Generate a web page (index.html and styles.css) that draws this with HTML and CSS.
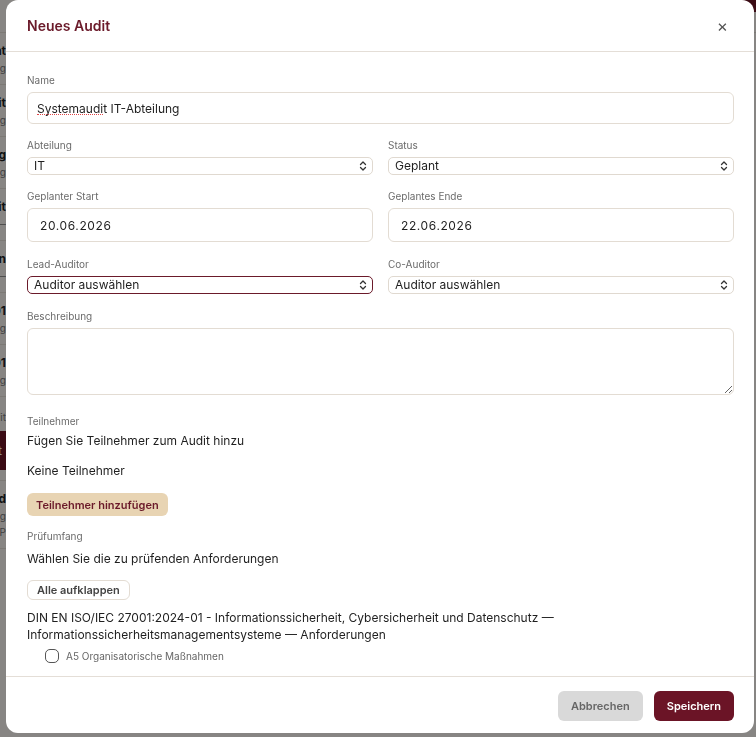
FILE: index.html
```html
<!DOCTYPE html>
<html lang="de">
<head>
    <meta charset="UTF-8">
    <meta name="viewport" content="width=device-width, initial-scale=1.0">
    <title>Neues Audit</title>
    <link rel="stylesheet" href="styles.css">
</head>
<body>
    <div class="page">
        <div class="page-top"><span class="page-action"></span></div>
        <div class="page-list">
            <div class="page-row"><b>Übersicht</b><small>Verwaltung</small></div>
            <div class="page-row"><b>Datenaudit</b><small>Verwaltung</small></div>
            <div class="page-row"><b>Prüfung</b><small>Verwaltung</small></div>
            <div class="page-row"><b>Lieferantenaudit</b><small>—</small></div>
            <div class="page-row"><b>Jahresplan</b><small>—</small></div>
            <div class="page-row"><b>ISO 27001</b><small>Verwaltung</small></div>
            <div class="page-row"><b>ISO 9001</b><small>Verwaltung</small></div>
            <div class="page-row"><small>Audit</small><span class="page-btn">Audit</span></div>
            <div class="page-row"><b>Fund</b><small>Verwaltung</small><small>SAP</small></div>
        </div>
    </div>
    <div class="backdrop"></div>

    <div class="modal">
        <div class="modal-header">
            <h2>Neues Audit</h2>
            <button class="close">&times;</button>
        </div>

        <div class="modal-body">
            <div class="field">
                <label>Name</label>
                <div class="input-wrap">
                    <input class="input" type="text" value="Systemaudit IT-Abteilung">
                    <span class="spell"></span>
                </div>
            </div>

            <div class="grid">
                <div class="field">
                    <label>Abteilung</label>
                    <div class="select-wrap">
                        <select class="select"><option>IT</option></select>
                        <svg class="chevron" viewBox="0 0 8 12"><path d="M1.5 4.5 4 2l2.5 2.5M1.5 7.5 4 10l2.5-2.5"/></svg>
                    </div>
                </div>
                <div class="field">
                    <label>Status</label>
                    <div class="select-wrap">
                        <select class="select"><option>Geplant</option></select>
                        <svg class="chevron" viewBox="0 0 8 12"><path d="M1.5 4.5 4 2l2.5 2.5M1.5 7.5 4 10l2.5-2.5"/></svg>
                    </div>
                </div>

                <div class="field">
                    <label>Geplanter Start</label>
                    <input class="input date" type="text" value="20.06.2026">
                </div>
                <div class="field">
                    <label>Geplantes Ende</label>
                    <input class="input date" type="text" value="22.06.2026">
                </div>

                <div class="field">
                    <label>Lead-Auditor</label>
                    <div class="select-wrap">
                        <select class="select focused"><option>Auditor auswählen</option></select>
                        <svg class="chevron" viewBox="0 0 8 12"><path d="M1.5 4.5 4 2l2.5 2.5M1.5 7.5 4 10l2.5-2.5"/></svg>
                    </div>
                </div>
                <div class="field">
                    <label>Co-Auditor</label>
                    <div class="select-wrap">
                        <select class="select"><option>Auditor auswählen</option></select>
                        <svg class="chevron" viewBox="0 0 8 12"><path d="M1.5 4.5 4 2l2.5 2.5M1.5 7.5 4 10l2.5-2.5"/></svg>
                    </div>
                </div>
            </div>

            <div class="field">
                <label>Beschreibung</label>
                <textarea class="textarea"></textarea>
            </div>

            <div class="section">
                <label>Teilnehmer</label>
                <p class="hint">Fügen Sie Teilnehmer zum Audit hinzu</p>
                <p class="empty">Keine Teilnehmer</p>
                <button class="btn btn-soft">Teilnehmer hinzufügen</button>
            </div>

            <div class="section scope">
                <label>Prüfumfang</label>
                <p class="hint">Wählen Sie die zu prüfenden Anforderungen</p>
                <button class="btn btn-outline">Alle aufklappen</button>
                <p class="norm">DIN EN ISO/IEC 27001:2024-01 - Informationssicherheit, Cybersicherheit und Datenschutz — Informationssicherheitsmanagementsysteme — Anforderungen</p>
                <div class="check-row">
                    <span class="check"></span>
                    <span>A5 Organisatorische Maßnahmen</span>
                </div>
            </div>
        </div>

        <div class="modal-footer">
            <button class="btn btn-cancel">Abbrechen</button>
            <button class="btn btn-primary">Speichern</button>
        </div>
    </div>
</body>
</html>
```

FILE: styles.css
```css
* {
    box-sizing: border-box;
}
body {
    margin: 0;
    font-family: Inter, "Liberation Sans", Arial, sans-serif;
    color: #1f1f1f;
    background-color: #f6f3ef;
    overflow: hidden;
}
.page {
    height: 737px;
}
.page-top {
    height: 33px;
    border-bottom: 1px solid #e2ddd6;
    display: flex;
    justify-content: flex-end;
}
.page-action {
    width: 30px;
    height: 12px;
    background-color: #6b1426;
    border-radius: 0 0 0 8px;
}
.page-list {
    margin-left: -110px;
    width: 116px;
}
.page-row {
    display: flex;
    flex-direction: column;
    align-items: flex-end;
    padding: 10px 0;
    border-bottom: 1px solid #e2ddd6;
    font-size: 12px;
}
.page-row small {
    font-size: 10px;
    color: #777;
    margin-top: 4px;
}
.page-btn {
    background-color: #6b1426;
    color: #fff;
    padding: 12px 4px;
    margin-top: 8px;
}
.backdrop {
    position: fixed;
    inset: 0;
    background-color: rgba(0, 0, 0, 0.45);
}
.modal {
    position: fixed;
    top: 0;
    left: 6px;
    width: 748px;
    height: 733px;
    background-color: #fff;
    border-radius: 12px;
    display: flex;
    flex-direction: column;
    overflow: hidden;
}
.modal-header {
    height: 52px;
    flex-shrink: 0;
    display: flex;
    align-items: center;
    justify-content: space-between;
    padding: 0 22px 0 21px;
    border-bottom: 1px solid #e4ded7;
}
.modal-header h2 {
    margin: 0;
    font-size: 14px;
    font-weight: 600;
    color: #6b1a2a;
}
.close {
    border: none;
    background: none;
    font-size: 17px;
    color: #555;
    padding: 0 4px;
    cursor: pointer;
    font-family: inherit;
}
.modal-body {
    flex: 1;
    overflow: hidden;
    padding: 21px 20px 0 21px;
}
.field {
    display: flex;
    flex-direction: column;
    margin-bottom: 14px;
}
.grid .field:nth-child(n+3) {
    margin-bottom: 15px;
}
label {
    display: block;
    font-size: 10px;
    line-height: 14px;
    color: #6b6b6b;
    margin-bottom: 5px;
}
.input {
    display: block;
    width: 100%;
    height: 32px;
    border: 1px solid #e3dcd3;
    border-radius: 6px;
    padding: 0 9px;
    font-size: 12px;
    font-family: inherit;
    color: #1f1f1f;
    outline: none;
}
.input.date {
    height: 34px;
    padding: 0 12px;
    letter-spacing: 0.6px;
}
.input-wrap {
    position: relative;
}
.spell {
    position: absolute;
    left: 10px;
    top: 22px;
    width: 66px;
    border-bottom: 1px dotted #e0484a;
}
.grid {
    display: grid;
    grid-template-columns: 1fr 1fr;
    column-gap: 15px;
}
.select-wrap {
    position: relative;
}
.select {
    display: block;
    width: 100%;
    height: 18px;
    appearance: none;
    border: 1px solid #e0d9d0;
    border-radius: 5px;
    background-color: #fff;
    font-size: 12px;
    font-family: inherit;
    color: #1f1f1f;
    padding: 0 0 0 6px;
    line-height: 16px;
    outline: none;
}
.select.focused {
    border-color: #6b1a2a;
}
.chevron {
    position: absolute;
    right: 6px;
    top: 3px;
    width: 8px;
    height: 12px;
    fill: none;
    stroke: #333;
    stroke-width: 1.3;
    stroke-linecap: round;
    stroke-linejoin: round;
}
.textarea {
    display: block;
    width: 100%;
    height: 67px;
    border: 1px solid #e3dcd3;
    border-radius: 6px;
    resize: vertical;
    font-family: inherit;
    outline: none;
}
.section {
    margin-top: 19px;
}
.section + .section {
    margin-top: 13px;
}
.section label {
    margin-bottom: 4px;
}
.scope label {
    margin-bottom: 7px;
}
p {
    margin: 0;
    font-size: 12px;
    line-height: 17px;
}
.hint {
    margin-bottom: 13px;
}
.empty {
    margin-bottom: 14px;
}
.btn {
    font-family: inherit;
    font-size: 11px;
    font-weight: 600;
    border-radius: 6px;
    cursor: pointer;
}
.btn-soft {
    display: block;
    height: 23px;
    padding: 0 9px;
    border: none;
    background-color: #e8d4b3;
    color: #6b1a2a;
}
.btn-outline {
    display: block;
    height: 20px;
    padding: 0 9px;
    border: 1px solid #e3dcd3;
    background-color: #fff;
    color: #444;
}
.norm {
    margin-top: 9px;
}
.check-row {
    display: flex;
    align-items: center;
    gap: 7px;
    margin: 6px 0 0 18px;
    font-size: 10px;
    color: #666;
}
.check {
    width: 14px;
    height: 14px;
    border: 1px solid #555;
    border-radius: 5px;
}
.modal-footer {
    height: 57px;
    flex-shrink: 0;
    border-top: 1px solid #e4ded7;
    display: flex;
    justify-content: flex-end;
    align-items: center;
    gap: 11px;
    padding: 2px 20px 0 0;
}
.btn-cancel {
    height: 30px;
    padding: 0 13px;
    border: none;
    background-color: #d9d9d9;
    color: #666;
}
.btn-primary {
    height: 30px;
    padding: 0 13px;
    border: none;
    background-color: #6b1426;
    color: #fff;
}
```
